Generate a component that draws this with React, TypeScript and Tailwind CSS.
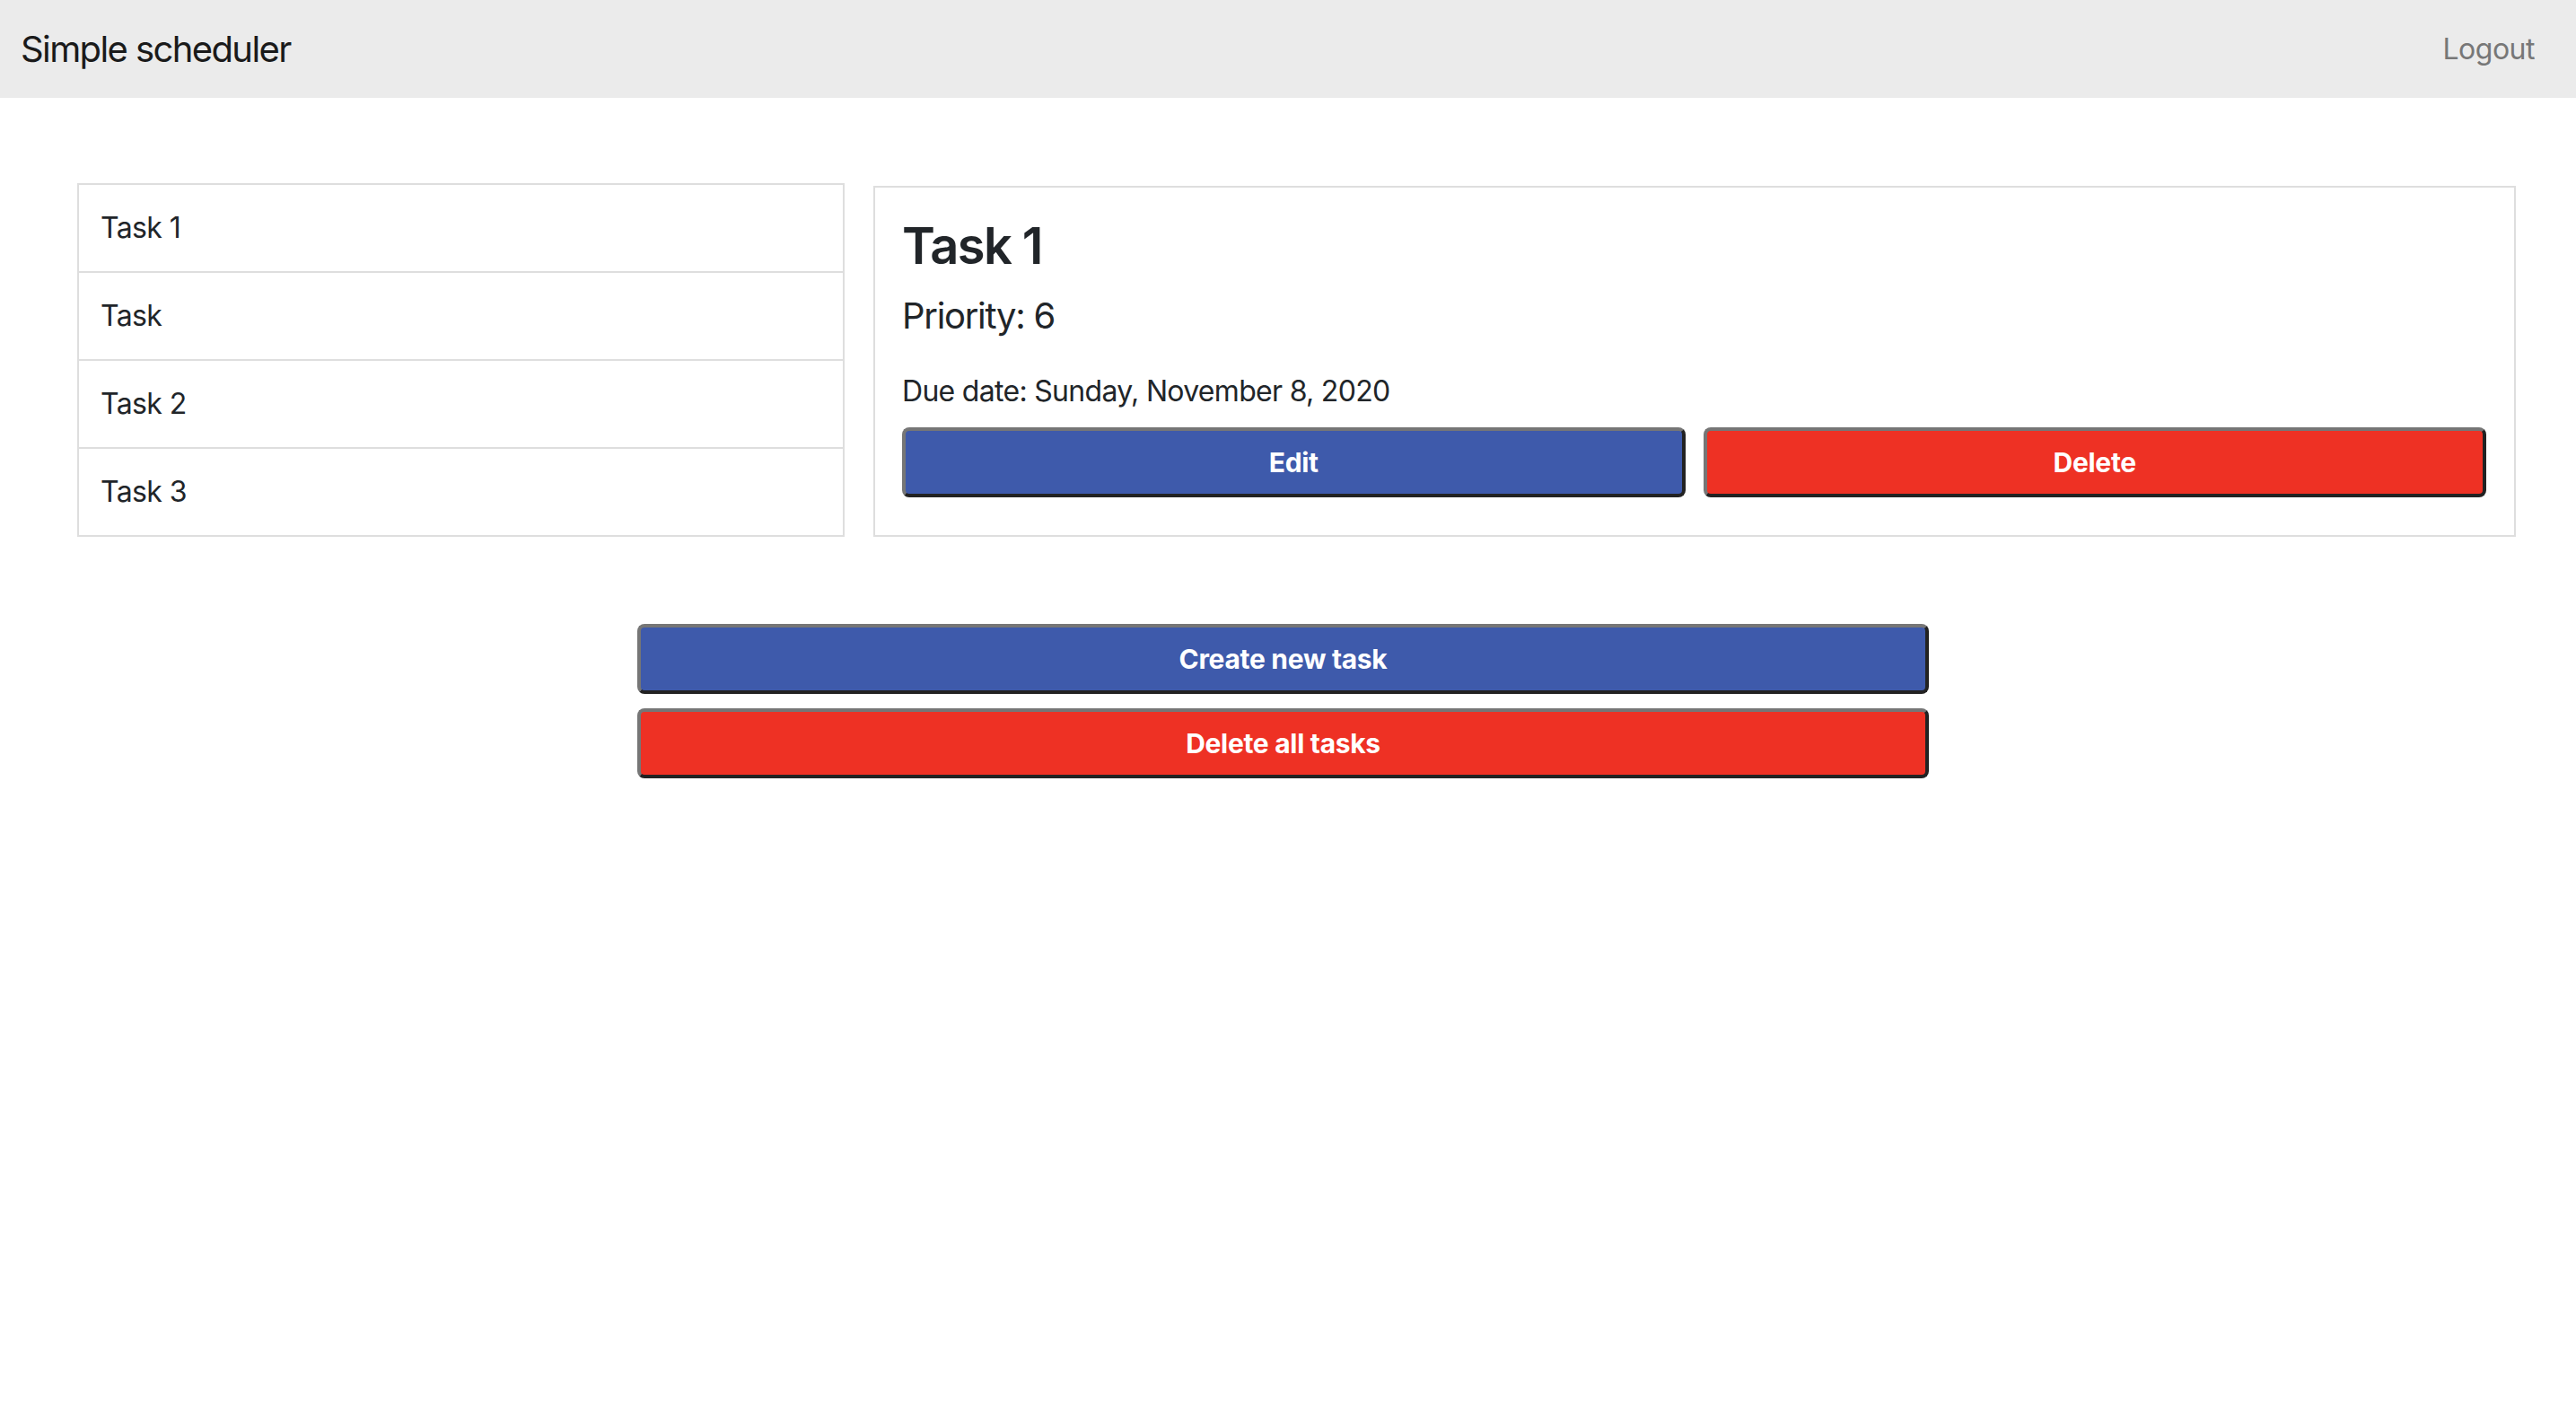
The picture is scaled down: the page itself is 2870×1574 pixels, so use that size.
import React, { useState } from 'react';

type Task = {
    id: number;
    title: string;
    priority: number;
    due: string;
};

const tasks: Task[] = [
    { id: 1, title: 'Task 1', priority: 6, due: 'Sunday, November 8, 2020' },
    { id: 2, title: 'Task', priority: 3, due: 'Monday, November 9, 2020' },
    { id: 3, title: 'Task 2', priority: 2, due: 'Tuesday, November 10, 2020' },
    { id: 4, title: 'Task 3', priority: 1, due: 'Friday, November 13, 2020' },
];

const btnBase =
    'w-full rounded-[8px] border-4 border-solid border-t-[#767676] border-l-[#767676] border-b-[#222222] border-r-[#222222] text-white text-[30px] font-bold tracking-[-0.3px]';

export default function App() {
    const [selected, setSelected] = useState(tasks[0]);

    return (
        <div className="min-h-screen bg-white text-[#212529] font-['Inter',sans-serif]">
            {/* Navbar */}
            <nav className="h-[109px] bg-[#ebebeb] flex items-center justify-between pl-[23px] pr-[46px]">
                <span className="text-[40px] text-[#1a1a1a] leading-none tracking-[-1.6px]">Simple scheduler</span>
                <a href="#" className="text-[32px] text-[#777777] leading-none tracking-[-0.5px]">
                    Logout
                </a>
            </nav>

            <div className="flex items-start pl-[86px] pr-[67px] pt-[95px] gap-[32px]">
                {/* Task list */}
                <ul className="w-[855px] shrink-0 border-2 border-[#dedede]">
                    {tasks.map((t, i) => (
                        <li
                            key={t.id}
                            onClick={() => setSelected(t)}
                            className={`px-[24px] py-[24px] text-[32px] leading-[48px] tracking-[-0.6px] cursor-pointer ${
                                i > 0 ? 'border-t-2 border-[#dedede]' : ''
                            }`}
                        >
                            {t.title}
                        </li>
                    ))}
                </ul>

                {/* Detail card */}
                <div className="flex-1 mt-[3px] border-2 border-[#dedede] pt-[32px] pb-[42px] pl-[30px] pr-[31px]">
                    <h3 className="text-[56px] leading-[1.2] font-semibold tracking-[-1.6px]">{selected.title}</h3>
                    <h5 className="mt-[20px] text-[40px] leading-[1.2] tracking-[-1.3px]">Priority: {selected.priority}</h5>
                    <p className="mt-[36px] text-[32px] leading-[48px] tracking-[-0.7px]">Due date: {selected.due}</p>
                    <div className="mt-[16px] flex gap-[20px]">
                        <button className={`${btnBase} h-[78px] bg-[#3e5aab]`}>Edit</button>
                        <button className={`${btnBase} h-[78px] bg-[#ee3124]`}>Delete</button>
                    </div>
                </div>
            </div>

            {/* Global actions */}
            <div className="mt-[97px] ml-[710px] w-[1439px] flex flex-col gap-[16px]">
                <button className={`${btnBase} h-[78px] bg-[#3e5aab]`}>Create new task</button>
                <button className={`${btnBase} h-[78px] bg-[#ee3124]`}>Delete all tasks</button>
            </div>
        </div>
    );
}
